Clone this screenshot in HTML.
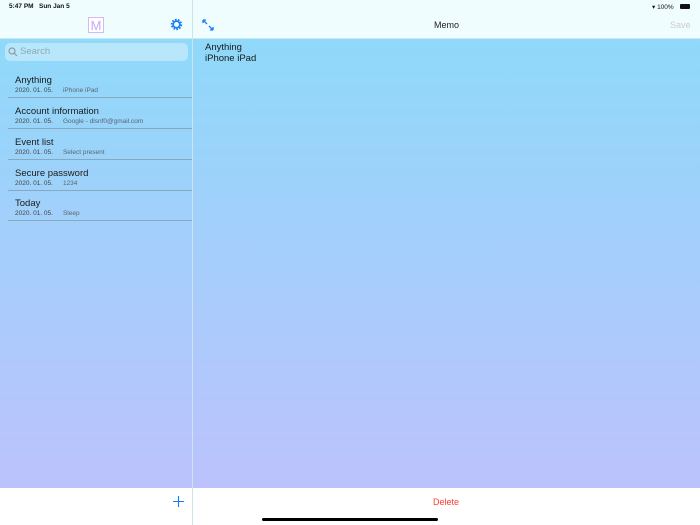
<!DOCTYPE html><html><head><style>
body{margin:0;width:700px;height:525px;position:relative;overflow:hidden;font-family:"Liberation Sans",sans-serif;background:#fff}
.hdr{position:absolute;left:0;top:0;width:700px;height:38px;background:#effdfe;border-bottom:1px solid #cfe6ee}
.main{position:absolute;left:0;top:39px;width:700px;height:449px;background:linear-gradient(#8fd9fa,#bcc2fc)}
.vd{position:absolute;left:192px;top:0;width:1px;height:525px;background:#d0e2ea}
.t{position:absolute;white-space:nowrap}
.row{position:absolute;left:8px;width:184px;height:30px;border-bottom:1px solid #86a9bf}
.row .a{position:absolute;left:7px;top:8px;font-size:9.5px;color:#1a1a1a}
.row .b{position:absolute;left:7px;top:20px;font-size:6.5px;color:#444}
.row .b span{margin-left:10px;color:#5a6670}
</style></head><body>
<div class="hdr"></div>
<div class="main"></div>
<div class="vd"></div>
<div class="t" style="left:9px;top:3px;font-size:6.5px;color:#111;font-weight:bold">5:47 PM&nbsp;&nbsp; Sun Jan 5</div>
<div class="t" style="left:652px;top:3px;font-size:6.5px;color:#111">▾ 100%</div>
<div style="position:absolute;left:680px;top:4px;width:10px;height:5px;background:#111;border-radius:1px"></div>
<div style="position:absolute;left:88px;top:17px;width:16px;height:16px;border:1px solid #d6b8f4;background:#fff;color:#c7a8f2;font-size:13px;text-align:center;line-height:15px;box-sizing:border-box">M</div>
<svg style="position:absolute;left:170px;top:18px" width="13" height="13" viewBox="0 0 13 13"><circle cx="6.5" cy="6.5" r="4.5" fill="none" stroke="#1a7cf5" stroke-width="2.4" stroke-dasharray="1.6 1.2"/><circle cx="6.5" cy="6.5" r="3.3" fill="none" stroke="#1a7cf5" stroke-width="1.6"/></svg>
<svg style="position:absolute;left:202px;top:19px" width="12" height="12" viewBox="0 0 12 12" stroke="#1a7cf5" stroke-width="1.3" fill="none"><path d="M1 1L5 5M1 1h3M1 1v3M11 11L7 7M11 11h-3M11 11v-3"/></svg>
<div class="t" style="left:434px;top:20px;font-size:9px;color:#222">Memo</div>
<div class="t" style="left:670px;top:20px;font-size:9px;color:#ccc">Save</div>
<div style="position:absolute;left:5px;top:43px;width:183px;height:18px;border-radius:5px;background:#b8e6fb"></div>
<svg style="position:absolute;left:8px;top:47px" width="10" height="10" viewBox="0 0 10 10" stroke="#8a9aa4" stroke-width="1.2" fill="none"><circle cx="4" cy="4" r="3"/><path d="M6.2 6.2L9 9"/></svg>
<div class="t" style="left:20px;top:46px;font-size:9.5px;color:#8fa7b4">Search</div>
<div class="row" style="top:67px"><div class="a">Anything</div><div class="b">2020. 01. 05.<span>iPhone iPad</span></div></div>
<div class="row" style="top:98px"><div class="a">Account information</div><div class="b">2020. 01. 05.<span>Google - dlsnf0@gmail.com</span></div></div>
<div class="row" style="top:129px"><div class="a">Event list</div><div class="b">2020. 01. 05.<span>Select present</span></div></div>
<div class="row" style="top:160px"><div class="a">Secure password</div><div class="b">2020. 01. 05.<span>1234</span></div></div>
<div class="row" style="top:190px"><div class="a">Today</div><div class="b">2020. 01. 05.<span>Sleep</span></div></div>
<div class="t" style="left:205px;top:43px;font-size:9.5px;line-height:10.5px;color:#1a1a1a">Anything<br>iPhone iPad</div>
<svg style="position:absolute;left:173px;top:496px" width="11" height="11" viewBox="0 0 11 11" stroke="#1a7cf5" stroke-width="1.1"><path d="M5.5 0V11M0 5.5H11"/></svg>
<div class="t" style="left:433px;top:497px;font-size:9px;color:#ff3b30">Delete</div>
<div style="position:absolute;left:262px;top:518px;width:176px;height:3px;border-radius:2px;background:#000"></div>
</body></html>
